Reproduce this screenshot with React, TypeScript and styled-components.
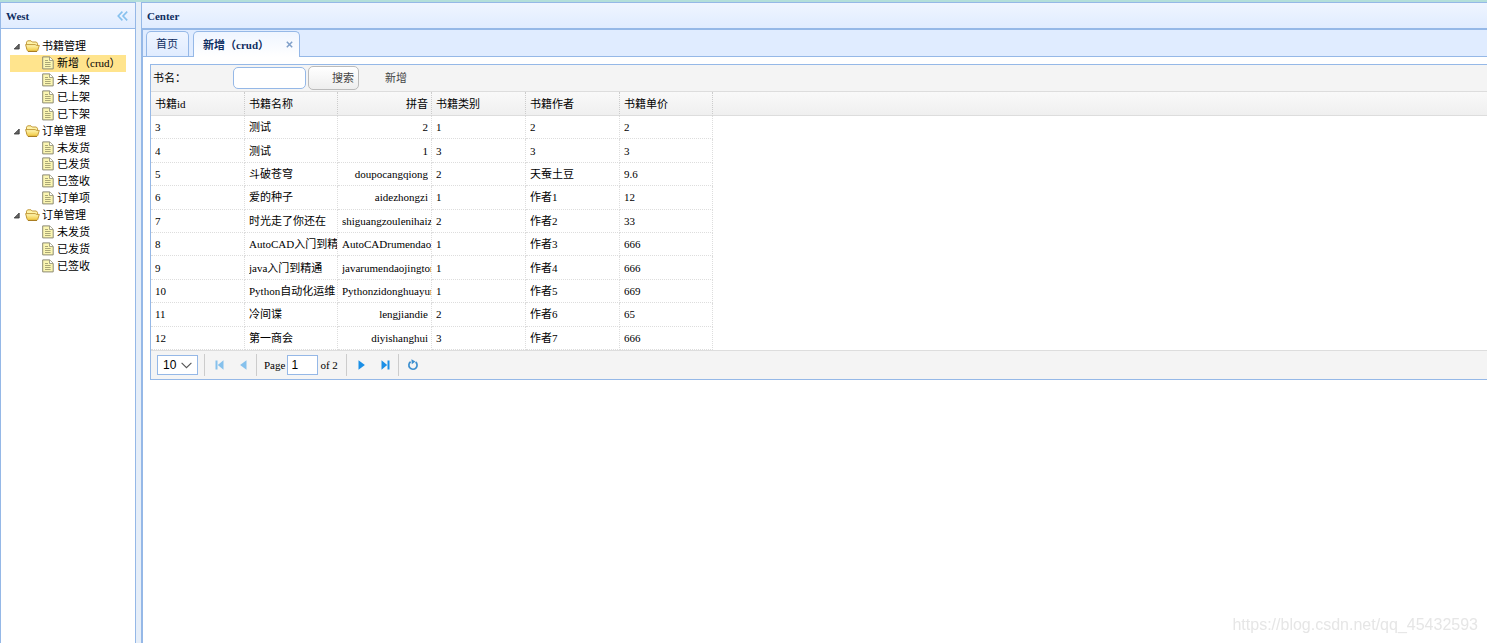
import React, { useState } from "react";
import styled, { createGlobalStyle, css } from "styled-components";

const line = "#95b8e7";
const rule = "#dddddd";
const dotted = "#dddddd";
const sans = `"Liberation Sans", Arial, "Noto Sans CJK SC", sans-serif`;

const GlobalStyle = createGlobalStyle`
  * { box-sizing: border-box; }
  body {
    margin: 0;
    background: #fff;
    color: #000;
    font-family: "Liberation Serif", "Noto Sans CJK SC", serif;
    font-size: 11px;
    line-height: 16px;
  }
  button, input, select { font: inherit; color: inherit; margin: 0; }
`;

const Page = styled.div`
  display: flex;
  flex-direction: column;
  min-height: 100vh;
  overflow: hidden;
`;

const North = styled.header`
  height: 2px;
  background: #b3dfda;
`;

const Body = styled.div`
  display: flex;
  flex: 1;
  background: #e6eef8;
  gap: 5px;
`;

const West = styled.aside`
  flex: 0 0 136px;
  display: flex;
  flex-direction: column;
  background: #fff;
  border: solid ${line};
  border-width: 1px 1px 0;
`;

const Center = styled.main`
  flex: 1;
  min-width: 0;
  display: flex;
  flex-direction: column;
  background: #fff;
  border: solid ${line};
  border-width: 1px 0 0 1px;
`;

const PanelHeader = styled.div`
  display: flex;
  align-items: center;
  justify-content: space-between;
  height: 26px;
  padding: 0 6px 0 5px;
  border-bottom: 1px solid ${line};
  background: linear-gradient(#eff5ff, #e0ecff);
`;

const PanelTitle = styled.h2`
  margin: 0;
  font-size: 11px;
  line-height: 16px;
  font-weight: bold;
  color: #0e2d5f;
`;

const IconButton = styled.button`
  display: flex;
  align-items: center;
  justify-content: center;
  width: 14px;
  height: 16px;
  padding: 0;
  border: 0;
  background: none;
`;

const Tree = styled.ul`
  display: grid;
  grid-auto-rows: 1fr;
  height: 236px;
  margin: 9px;
  padding: 0;
  list-style: none;
`;

const TreeRow = styled.li<{ $leaf?: boolean; $selected?: boolean }>`
  display: flex;
  align-items: center;
  gap: ${(p) => (p.$leaf ? 3 : 2)}px;
  padding-left: ${(p) => (p.$leaf ? 32 : 2)}px;
  white-space: nowrap;
  background: ${(p) => (p.$selected ? "#ffe48d" : "transparent")};
  svg { flex: none; }
`;

const TabBar = styled.div`
  display: flex;
  align-items: flex-end;
  gap: 4px;
  height: 28px;
  padding-left: 3px;
  border: solid ${line};
  border-width: 1px 0 1px 1px;
  background: #e0ecff;
`;

const Tab = styled.div<{ $active?: boolean }>`
  display: flex;
  align-items: center;
  height: 25px;
  padding: 0 3px 0 9px;
  border: 1px solid ${line};
  border-bottom: 0;
  border-radius: 5px 5px 0 0;
  color: #0e2d5f;
  background: linear-gradient(#eff5ff, #e0ecff);
  ${(p) =>
    p.$active &&
    css`
      height: 26px;
      margin-bottom: -1px;
      font-weight: bold;
      background: linear-gradient(#eff5ff, #ffffff);
    `}
`;

const TabButton = styled.button<{ $closable?: boolean }>`
  padding: 0;
  width: ${(p) => (p.$closable ? 79 : 29)}px;
  text-align: left;
  border: 0;
  background: none;
  white-space: nowrap;
`;

const TabContent = styled.section`
  flex: 1;
  padding: 7px 0 0 7px;
  border-left: 1px solid ${line};
`;

const DataGrid = styled.div`
  border: solid ${line};
  border-width: 1px 0 1px 1px;
`;

const Toolbar = styled.form`
  display: flex;
  align-items: center;
  height: 27px;
  padding-left: 2px;
  border-bottom: 1px solid ${rule};
  background: #f4f4f4;
`;

const SearchLabel = styled.label`
  width: 80px;
`;

const SearchInput = styled.input`
  width: 73px;
  height: 22px;
  padding: 0 4px;
  border: 1px solid ${line};
  border-radius: 5px;
  background: #fff;
  outline: none;
`;

const LinkButton = styled.button<{ $plain?: boolean }>`
  width: 51px;
  height: 24px;
  margin-left: 2px;
  padding: 0 4px 0 0;
  text-align: right;
  color: #444;
  border: 1px solid ${(p) => (p.$plain ? "transparent" : "#bbbbbb")};
  border-radius: 5px;
  background: ${(p) => (p.$plain ? "none" : "linear-gradient(#ffffff, #eeeeee)")};
`;

const Table = styled.table`
  width: 100%;
  height: 258px;
  table-layout: fixed;
  border-collapse: separate;
  border-spacing: 0;
`;

const HeadRow = styled.tr`
  height: 24px;
  background: linear-gradient(#f9f9f9, #efefef);
`;

const HeadCell = styled.th<{ $right?: boolean }>`
  height: 24px;
  padding: 0 3px 0 4px;
  font-weight: normal;
  text-align: ${(p) => (p.$right ? "right" : "left")};
  border-right: 1px dotted #cccccc;
  border-bottom: 1px solid ${rule};
  &:last-child { border-right: 0; }
`;

const Cell = styled.td`
  padding: 0 3px 0 4px;
  border: dotted ${dotted};
  border-width: 0 1px 1px 0;
  &:last-child { border: 0; }
`;

const CellText = styled.div<{ $right?: boolean; $clipped?: boolean }>`
  margin-right: ${(p) => (p.$right && !p.$clipped ? 0 : -3)}px;
  text-align: ${(p) => (p.$right ? "right" : "left")};
  overflow: hidden;
  white-space: nowrap;
`;

const Pager = styled.nav`
  display: flex;
  align-items: center;
  height: 29px;
  padding-left: 6px;
  border-top: 1px solid ${rule};
  background: #f4f4f4;
`;

const SelectWrap = styled.div`
  position: relative;
  margin-right: 6px;
  svg {
    position: absolute;
    right: 6px;
    top: 7px;
    pointer-events: none;
  }
`;

const PageSize = styled.select`
  display: block;
  appearance: none;
  width: 41px;
  height: 20px;
  padding: 0 5px;
  border: 1px solid ${line};
  border-radius: 0;
  background: #fff;
  font-family: ${sans};
  font-size: 12px;
`;

const Separator = styled.span`
  width: 1px;
  height: 22px;
  background: #cccccc;
`;

const PagerButton = styled(IconButton)<{ $dim?: boolean }>`
  width: 24px;
  height: 24px;
  opacity: ${(p) => (p.$dim ? 0.5 : 1)};
`;

const ButtonGroup = styled.div`
  display: flex;
  width: 51px;
  padding-left: 2px;
`;

const PageField = styled.label`
  display: flex;
  align-items: center;
  gap: 2px;
  width: 89px;
  padding-left: 7px;
  white-space: nowrap;
`;

const PageNumber = styled.input`
  width: 31px;
  height: 20px;
  padding: 0 3px;
  border: 1px solid ${line};
  background: #fff;
  font-family: ${sans};
  font-size: 12px;
`;

const Watermark = styled.div`
  position: fixed;
  right: 9px;
  bottom: 8px;
  font-family: ${sans};
  font-size: 16px;
  line-height: 20px;
  color: #e6e6e6;
`;

const CollapseIcon = () => (
  <svg width="11" height="10" viewBox="0 0 11 10" fill="none" stroke="#86c1ee" strokeWidth="1.6">
    <path d="M5.4 .6 1.2 5l4.2 4.4M10.2 .6 6 5l4.2 4.4" />
  </svg>
);

const ArrowIcon = () => (
  <svg width="11" height="12" viewBox="0 0 11 12">
    <path d="M7.2 4V9H2.2Z" fill="#666" stroke="#333" strokeWidth=".8" strokeLinejoin="round" />
  </svg>
);

const FolderIcon = () => (
  <svg width="15" height="14" viewBox="0 0 15 14">
    <defs>
      <linearGradient id="folder" x1="0" y1="0" x2="0" y2="1">
        <stop offset="0" stopColor="#fff8b8" />
        <stop offset="1" stopColor="#f0c63c" />
      </linearGradient>
    </defs>
    <path d="M1.5 10V3.2L2.6 1.8H6L7.2 3H11.3L12.4 4.2V7" fill="#fff3a8" stroke="#c39a3b" />
    <path d="M.6 5.6H10.2L11.4 6.4H14.3L12.7 11.6 12 12.3H3.2L2.2 11.5Z" fill="url(#folder)" stroke="#c39a3b" strokeLinejoin="round" />
    <path d="M3 12.5H12" stroke="#a97d22" />
  </svg>
);

const FileIcon = () => (
  <svg width="12" height="14" viewBox="0 0 12 14">
    <path d="M.7 .9H7.6L11.2 4.4V12.9H.7Z" fill="#fbf6b2" stroke="#8d8b74" />
    <path d="M7.5 1V4.5H11" fill="#fff" stroke="#8d8b74" strokeWidth=".8" />
    <path d="M3 4.5H6M3 6.5H8.6M3 8.5H8.6M3 10.5H8.6" stroke="#aaa777" />
  </svg>
);

const CloseIcon = () => (
  <svg width="7" height="7" viewBox="0 0 7 7" stroke="#7f9fc9" strokeWidth="1.5">
    <path d="M.8 .8 6.2 6.2M6.2 .8 .8 6.2" />
  </svg>
);

const ChevronIcon = () => (
  <svg width="11" height="7" viewBox="0 0 11 7" fill="none" stroke="#555" strokeWidth="1.1">
    <path d="M.6 .8 5.5 5.7 10.4 .8" />
  </svg>
);

const EdgeIcon = ({ flip }: { flip?: boolean }) => (
  <svg width="9" height="10" viewBox="0 0 9 10" fill="#1a8fe6">
    <g transform={flip ? "matrix(-1 0 0 1 9 0)" : undefined}>
      <path d="M.5 .5h2v9h-2zM8.5 .3v9.4L2.8 5z" />
    </g>
  </svg>
);

const StepIcon = ({ flip }: { flip?: boolean }) => (
  <svg width="7" height="10" viewBox="0 0 7 10" fill="#1a8fe6">
    <path d={flip ? "M.5 .2v9.6L6.9 5z" : "M6.5 .2v9.6L.1 5z"} />
  </svg>
);

const RefreshIcon = () => (
  <svg width="12" height="12" viewBox="0 0 12 12">
    <path d="M3.6 2.8A4.1 4.1 0 1 0 8.6 3" fill="none" stroke="#3c8fcf" strokeWidth="1.7" />
    <path d="M4.4 .3 8.4 2.6 4.8 5.2Z" fill="#3c8fcf" />
  </svg>
);

const menu = [
  { title: "书籍管理", items: ["新增（crud）", "未上架", "已上架", "已下架"] },
  { title: "订单管理", items: ["未发货", "已发货", "已签收", "订单项"] },
  { title: "订单管理", items: ["未发货", "已发货", "已签收"] },
];

const columns = [
  { title: "书籍id", width: 94 },
  { title: "书籍名称", width: 93 },
  { title: "拼音", width: 94, right: true },
  { title: "书籍类别", width: 94 },
  { title: "书籍作者", width: 94 },
  { title: "书籍单价", width: 93 },
];

const books = [
  ["3", "测试", "2", "1", "2", "2"],
  ["4", "测试", "1", "3", "3", "3"],
  ["5", "斗破苍穹", "doupocangqiong", "2", "天蚕土豆", "9.6"],
  ["6", "爱的种子", "aidezhongzi", "1", "作者1", "12"],
  ["7", "时光走了你还在", "shiguangzoulenihaizai", "2", "作者2", "33"],
  ["8", "AutoCAD入门到精通", "AutoCADrumendaojingtong", "1", "作者3", "666"],
  ["9", "java入门到精通", "javarumendaojingtong", "1", "作者4", "666"],
  ["10", "Python自动化运维", "Pythonzidonghuayunwei", "1", "作者5", "669"],
  ["11", "冷间谍", "lengjiandie", "2", "作者6", "65"],
  ["12", "第一商会", "diyishanghui", "3", "作者7", "666"],
];

export default function App() {
  const [name, setName] = useState("");
  const [page, setPage] = useState("1");

  return (
    <>
      <GlobalStyle />
      <Page>
        <North />
        <Body>
          <West>
            <PanelHeader>
              <PanelTitle>West</PanelTitle>
              <IconButton type="button" aria-label="Collapse">
                <CollapseIcon />
              </IconButton>
            </PanelHeader>
            <Tree>
              {menu.map((group, g) => (
                <React.Fragment key={g}>
                  <TreeRow>
                    <ArrowIcon />
                    <FolderIcon />
                    <span>{group.title}</span>
                  </TreeRow>
                  {group.items.map((item, i) => (
                    <TreeRow key={item} $leaf $selected={g === 0 && i === 0}>
                      <FileIcon />
                      <span>{item}</span>
                    </TreeRow>
                  ))}
                </React.Fragment>
              ))}
            </Tree>
          </West>
          <Center>
            <PanelHeader>
              <PanelTitle>Center</PanelTitle>
            </PanelHeader>
            <TabBar>
              <Tab>
                <TabButton type="button">首页</TabButton>
              </Tab>
              <Tab $active>
                <TabButton type="button" $closable>新增（crud）</TabButton>
                <IconButton type="button" aria-label="Close">
                  <CloseIcon />
                </IconButton>
              </Tab>
            </TabBar>
            <TabContent>
              <DataGrid>
                <Toolbar onSubmit={(e) => e.preventDefault()}>
                  <SearchLabel htmlFor="book-name">书名：</SearchLabel>
                  <SearchInput id="book-name" value={name} onChange={(e) => setName(e.target.value)} />
                  <LinkButton type="submit">搜索</LinkButton>
                  <LinkButton type="button" $plain>新增</LinkButton>
                </Toolbar>
                <Table>
                  <colgroup>
                    {columns.map((c) => (
                      <col key={c.title} width={c.width} />
                    ))}
                    <col />
                  </colgroup>
                  <thead>
                    <HeadRow>
                      {columns.map((c) => (
                        <HeadCell key={c.title} $right={c.right}>{c.title}</HeadCell>
                      ))}
                      <HeadCell as="td" />
                    </HeadRow>
                  </thead>
                  <tbody>
                    {books.map((book) => (
                      <tr key={book[0]}>
                        {book.map((value, i) => (
                          <Cell key={i}>
                            <CellText $right={columns[i].right} $clipped={value.length > 16}>
                              {value}
                            </CellText>
                          </Cell>
                        ))}
                        <Cell />
                      </tr>
                    ))}
                  </tbody>
                </Table>
                <Pager aria-label="Pagination">
                  <SelectWrap>
                    <PageSize aria-label="Rows per page" defaultValue="10">
                      <option>10</option>
                      <option>20</option>
                      <option>50</option>
                    </PageSize>
                    <ChevronIcon />
                  </SelectWrap>
                  <Separator />
                  <ButtonGroup>
                    <PagerButton type="button" $dim aria-label="First page"><EdgeIcon /></PagerButton>
                    <PagerButton type="button" $dim aria-label="Previous page"><StepIcon /></PagerButton>
                  </ButtonGroup>
                  <Separator />
                  <PageField>
                    Page
                    <PageNumber value={page} onChange={(e) => setPage(e.target.value)} />
                    of 2
                  </PageField>
                  <Separator />
                  <ButtonGroup>
                    <PagerButton type="button" aria-label="Next page"><StepIcon flip /></PagerButton>
                    <PagerButton type="button" aria-label="Last page"><EdgeIcon flip /></PagerButton>
                  </ButtonGroup>
                  <Separator />
                  <ButtonGroup>
                    <PagerButton type="button" aria-label="Refresh"><RefreshIcon /></PagerButton>
                  </ButtonGroup>
                </Pager>
              </DataGrid>
            </TabContent>
          </Center>
        </Body>
        <Watermark>https://blog.csdn.net/qq_45432593</Watermark>
      </Page>
    </>
  );
}
